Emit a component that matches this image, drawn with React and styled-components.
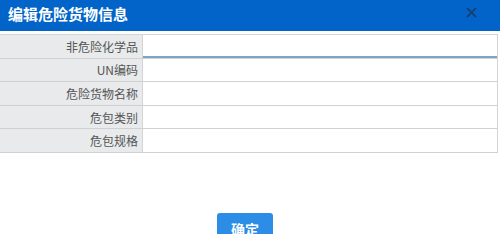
import React from 'react';
import styled, { createGlobalStyle } from 'styled-components';

const GlobalStyle = createGlobalStyle`
  html, body {
    margin: 0;
    padding: 0;
    background: #fff;
    font-family: "Microsoft YaHei", "Noto Sans CJK SC", "Liberation Sans", sans-serif;
  }
`;

const Dialog = styled.div`
  width: 500px;
  height: 234px;
  overflow: hidden;
  background: #fff;
  display: flex;
  flex-direction: column;
`;

const Header = styled.div`
  flex-shrink: 0;
  height: 31px;
  background: #0264c8;
  display: flex;
  align-items: center;
  justify-content: space-between;
  padding: 0 23px 0 8px;
  box-sizing: border-box;
`;

const Title = styled.div`
  color: #fff;
  font-size: 15px;
  font-weight: bold;
  line-height: 18px;
  margin-top: -4px;
`;

const Close = styled.div`
  width: 11px;
  height: 11px;
  margin-top: -6px;
  display: flex;
`;

const Table = styled.div`
  flex-shrink: 0;
  margin-top: 3px;
  width: 498px;
  border-top: 1px solid #d4d4d4;
  border-right: 1px solid #d4d4d4;
  box-sizing: border-box;
`;

const Row = styled.div`
  display: flex;
  height: 23.6px;
  border-bottom: 1px solid #d0d0d0;
  box-sizing: border-box;
`;

const Label = styled.div`
  width: 143px;
  background: #e8eaec;
  color: #555;
  font-size: 12px;
  display: flex;
  align-items: center;
  justify-content: flex-end;
  padding-right: 4px;
  box-sizing: border-box;
  border-right: 1px solid #d4d4d4;
`;

const Input = styled.input`
  flex: 1;
  border: none;
  outline: none;
  margin: 0;
  padding: 0 4px;
  font-size: 12px;
  background: #fff;
  border-bottom: 2px solid ${(p) => (p.$focused ? '#7ba6c8' : 'transparent')};
  box-sizing: border-box;
`;

const Footer = styled.div`
  flex: 1;
  display: flex;
  justify-content: center;
  align-items: flex-start;
  padding-top: 60px;
  padding-right: 10px;
`;

const Button = styled.button`
  flex-shrink: 0;
  width: 56px;
  height: 30px;
  background: #2b8de6;
  color: #fff;
  border: none;
  border-radius: 3px;
  font-size: 14px;
  font-weight: bold;
  font-family: inherit;
  padding: 0;
  display: flex;
  justify-content: center;
  padding-top: 6px;
  box-sizing: border-box;
`;

const fields = ['非危险化学品', 'UN编码', '危险货物名称', '危包类别', '危包规格'];

export default function App() {
  return (
    <Dialog>
      <GlobalStyle />
      <Header>
        <Title>编辑危险货物信息</Title>
        <Close>
          <svg width="11" height="11" viewBox="0 0 11 11">
            <path d="M1 1L10 10M10 1L1 10" stroke="#1d3a66" strokeWidth="1.6" />
          </svg>
        </Close>
      </Header>
      <Table>
        {fields.map((f, i) => (
          <Row key={f}>
            <Label>{f}</Label>
            <Input $focused={i === 0} />
          </Row>
        ))}
      </Table>
      <Footer>
        <Button>确定</Button>
      </Footer>
    </Dialog>
  );
}
